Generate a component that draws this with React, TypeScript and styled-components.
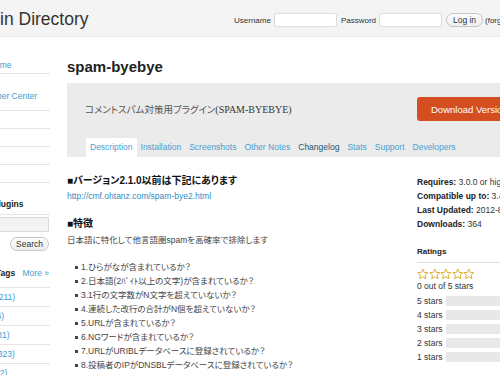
import React from "react";
import styled, { createGlobalStyle } from "styled-components";

const GlobalStyle = createGlobalStyle`
  html, body { margin: 0; padding: 0; background: #fff; overflow: hidden; }
  body {
    font-family: "Liberation Sans", Arial, "Noto Sans CJK JP", sans-serif;
    color: #333;
    font-size: 8.5px;
    font-feature-settings: "palt";
  }
  * { box-sizing: border-box; }
  ul { list-style: none; margin: 0; padding: 0; }
`;

const Header = styled.header`
  height: 37px;
  background: #f4f4f4;
  border-bottom: 1px solid #e8e8e8;
  display: grid;
  grid-template-columns: 269px max-content;
  align-items: center;
  margin-left: -35px;
  white-space: nowrap;
`;

const SiteTitle = styled.div`
  font-size: 17.5px;
  color: #333;
  padding-top: 3px;
`;

const LoginForm = styled.form`
  display: flex;
  align-items: center;
  gap: 2px;
  padding-top: 4px;
  font-size: 8px;
`;

const LoginLabel = styled.label`
  color: #333;
  margin-right: 1px;
`;

const LoginInput = styled.input`
  width: 63px;
  height: 14px;
  border: 1px solid #dcdcdc;
  border-radius: 2px;
  background: #fff;
  margin-right: 2px;
`;

const PillButton = styled.button<{ $w: number }>`
  width: ${(p) => p.$w}px;
  height: 14px;
  padding: 0;
  border: 1px solid #c6c6c6;
  border-radius: 8px;
  background: linear-gradient(#fdfdfd, #efefef);
  font-family: inherit;
  font-size: 8.5px;
  color: #333;
  line-height: 12px;
`;

const Forgot = styled.span`
  color: #333;
`;

const Layout = styled.div`
  display: grid;
  grid-template-columns: 92px 480px;
  column-gap: 17px;
  margin-left: -42px;
  white-space: nowrap;
`;

const Sidebar = styled.aside`
  padding-top: 19px;
`;

const NavItem = styled.li`
  padding: 4px 0 3px 2px;
  line-height: 10px;
  border-bottom: 1px solid #e6e6e6;
`;

const SubList = styled.ul`
  margin: 3px 0 6px;
`;

const SubItem = styled.li`
  padding-left: 10.5px;
  line-height: 10px;
`;

const Link = styled.a`
  color: #3f9bd0;
  text-decoration: none;
`;

const SideHeading = styled.div<{ $gap: number; $pad: number }>`
  display: flex;
  justify-content: space-between;
  margin-top: ${(p) => p.$gap}px;
  padding: 0 0 ${(p) => p.$pad}px 4px;
  line-height: 10px;
  font-weight: bold;
  color: #222;
  border-bottom: 1px solid #e6e6e6;
`;

const MoreLink = styled(Link)`
  font-weight: normal;
  margin-right: 1px;
`;

const SearchInput = styled.input`
  display: block;
  width: 91px;
  height: 15px;
  margin-top: 2px;
  border: 1px solid #dadada;
  background: #f3f3f3;
`;

const SearchRow = styled.div`
  display: flex;
  justify-content: flex-end;
  margin-top: 5px;
  padding-right: 1px;
`;

const TagItem = styled.li`
  padding: 4px 0 4px 2px;
  line-height: 10px;
  border-bottom: 1px solid #e6e6e6;
`;

const Main = styled.main``;

const PluginTitle = styled.h1`
  margin: 21px 0 7px;
  font-size: 15px;
  line-height: 18px;
  color: #222;
`;

const HeadBox = styled.section`
  background: #ebebeb;
  padding-top: 14px;
`;

const HeadRow = styled.div`
  display: grid;
  grid-template-columns: 350px auto;
  align-items: center;
`;

const Subtitle = styled.div`
  padding-left: 18px;
  font-size: 9.5px;
  color: #555;
`;

const SerifPart = styled.span`
  font-family: "Liberation Serif", "Times New Roman", serif;
  font-size: 10px;
  color: #333;
`;

const DownloadButton = styled.a`
  display: flex;
  align-items: center;
  width: max-content;
  height: 24px;
  padding: 0 14px;
  background: #d54e21;
  border-radius: 3px;
  color: #fff;
  font-size: 9.5px;
  text-decoration: none;
`;

const Tabs = styled.nav`
  display: flex;
  margin-top: 17px;
  padding-left: 19px;
`;

const Tab = styled.a<{ $active?: boolean; $dark?: boolean }>`
  display: block;
  height: 19px;
  line-height: 19px;
  padding: 0 4px;
  background: ${(p) => (p.$active ? "#fff" : "transparent")};
  color: ${(p) => (p.$dark ? "#245573" : "#4aa0d0")};
  text-decoration: none;
`;

const Body = styled.div`
  display: grid;
  grid-template-columns: 350px auto;
`;

const Article = styled.div``;

const SectionTitle = styled.h3<{ $gap: number }>`
  margin: ${(p) => p.$gap}px 0 0;
  font-size: 10px;
  line-height: 14px;
  color: #111;
`;

const UrlLink = styled(Link)`
  display: block;
  margin-top: 2px;
  line-height: 12px;
  color: #2f8dc4;
`;

const Para = styled.p`
  margin: 3px 0 0;
  line-height: 12px;
  color: #444;
`;

const CheckList = styled.ul`
  margin-top: 14px;
`;

const CheckItem = styled.li`
  display: flex;
  align-items: center;
  line-height: 14px;
  color: #444;
  &::before {
    content: "";
    width: 3px;
    height: 3px;
    background: #444;
    margin: 0 3px 0 8px;
  }
`;

const Meta = styled.aside``;

const MetaList = styled.ul`
  margin-top: 18px;
`;

const MetaLine = styled.li`
  line-height: 14px;
  color: #333;
  b { color: #222; }
`;

const RatingsHeading = styled.div`
  margin-top: 16px;
  padding-bottom: 5px;
  line-height: 10px;
  font-size: 8px;
  font-weight: bold;
  color: #222;
  border-bottom: 1px solid #dedede;
`;

const Stars = styled.div`
  display: flex;
  margin-top: 5px;
  height: 12px;
`;

const RatingText = styled.div`
  line-height: 12px;
  margin-bottom: 2px;
`;

const BarRow = styled.div`
  display: grid;
  grid-template-columns: 29px 1fr;
  align-items: center;
  height: 14px;
`;

const Bar = styled.div`
  height: 10px;
  background: #e8e8e8;
`;

const Star = () => (
  <svg width="11.6" height="12" viewBox="0 0 24 24">
    <path
      d="M12 1.8l3 6.9 7.4.7-5.6 4.9 1.7 7.3L12 17.7l-6.5 3.9 1.7-7.3-5.6-4.9 7.4-.7z"
      fill="#fff"
      stroke="#d8a414"
      strokeWidth="1.8"
      strokeLinejoin="round"
    />
  </svg>
);

const checks = [
  "1.ひらがなが含まれているか？",
  "2.日本語(2ﾊﾞｲﾄ以上の文字)が含まれているか？",
  "3.1行の文字数がN文字を超えていないか？",
  "4.連続した改行の合計がN個を超えていないか？",
  "5.URLが含まれているか？",
  "6.NGワードが含まれているか？",
  "7.URLがURIBLデータベースに登録されているか？",
  "8.投稿者のIPがDNSBLデータベースに登録されているか？",
];

const tags = [
  ["widgets", "3211"],
  ["Post", "2616"],
  ["plugin", "1981"],
  ["sidebar", "2323"],
  ["posts", "1562"],
];

const tabs = [
  "Description",
  "Installation",
  "Screenshots",
  "Other Notes",
  "Changelog",
  "Stats",
  "Support",
  "Developers",
];

export default function App() {
  return (
    <>
      <GlobalStyle />
      <Header>
        <SiteTitle>Plugin Directory</SiteTitle>
        <LoginForm>
          <LoginLabel>Username</LoginLabel>
          <LoginInput />
          <LoginLabel>Password</LoginLabel>
          <LoginInput />
          <PillButton type="button" $w={37}>Log in</PillButton>
          <Forgot>(forgot?)</Forgot>
        </LoginForm>
      </Header>
      <Layout>
        <Sidebar>
          <ul>
            <NavItem><Link>Extend Home</Link></NavItem>
            <NavItem>
              <Link>Plugins</Link>
              <SubList>
                <SubItem><Link>Developer Center</Link></SubItem>
              </SubList>
            </NavItem>
            <NavItem><Link>Themes</Link></NavItem>
            <NavItem><Link>Mobile</Link></NavItem>
            <NavItem><Link>Ideas</Link></NavItem>
            <NavItem><Link>Kvetch!</Link></NavItem>
          </ul>
          <SideHeading $gap={16} $pad={5}>Search Plugins</SideHeading>
          <SearchInput />
          <SearchRow>
            <PillButton type="button" $w={39}>Search</PillButton>
          </SearchRow>
          <SideHeading $gap={17} $pad={9}>
            <span>Popular Tags</span>
            <MoreLink>More »</MoreLink>
          </SideHeading>
          <ul>
            {tags.map(([t, n]) => (
              <TagItem key={t}>
                <Link>{t} ({n})</Link>
              </TagItem>
            ))}
          </ul>
        </Sidebar>
        <Main>
          <PluginTitle>spam-byebye</PluginTitle>
          <HeadBox>
            <HeadRow>
              <Subtitle>
                コメントスパム対策用プラグイン<SerifPart>(SPAM-BYEBYE)</SerifPart>
              </Subtitle>
              <DownloadButton>Download Version 1.1.1</DownloadButton>
            </HeadRow>
            <Tabs>
              {tabs.map((t, i) => (
                <Tab key={t} $active={i === 0} $dark={t === "Changelog"}>
                  {t}
                </Tab>
              ))}
            </Tabs>
          </HeadBox>
          <Body>
            <Article>
              <SectionTitle $gap={17}>■バージョン2.1.0以前は下記にあります</SectionTitle>
              <UrlLink>http://cmf.ohtanz.com/spam-bye2.html</UrlLink>
              <SectionTitle $gap={15}>■特徴</SectionTitle>
              <Para>日本語に特化して他言語圏spamを高確率で排除します</Para>
              <CheckList>
                {checks.map((c) => (
                  <CheckItem key={c}>{c}</CheckItem>
                ))}
              </CheckList>
            </Article>
            <Meta>
              <MetaList>
                <MetaLine><b>Requires:</b> 3.0.0 or higher</MetaLine>
                <MetaLine><b>Compatible up to:</b> 3.4.1</MetaLine>
                <MetaLine><b>Last Updated:</b> 2012-8-5</MetaLine>
                <MetaLine><b>Downloads:</b> 364</MetaLine>
              </MetaList>
              <RatingsHeading>Ratings</RatingsHeading>
              <Stars>
                <Star /><Star /><Star /><Star /><Star />
              </Stars>
              <RatingText>0 out of 5 stars</RatingText>
              {[5, 4, 3, 2, 1].map((n) => (
                <BarRow key={n}>
                  <span>{n} stars</span>
                  <Bar />
                </BarRow>
              ))}
            </Meta>
          </Body>
        </Main>
      </Layout>
    </>
  );
}
